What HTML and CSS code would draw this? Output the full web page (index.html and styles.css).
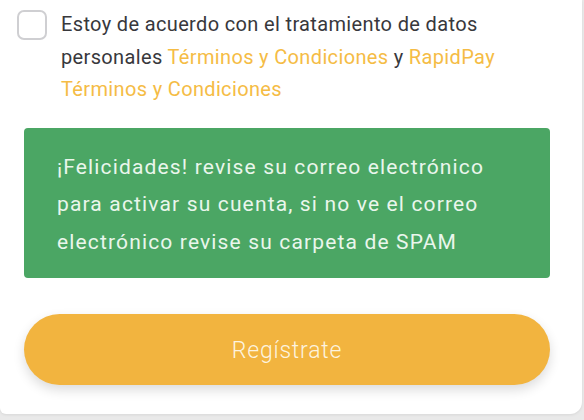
FILE: index.html
```html
<!DOCTYPE html>
<html lang="es">
<head>
<meta charset="utf-8">
<link rel="stylesheet" href="styles.css">
</head>
<body>
<div class="card">
  <label class="terms">
    <span class="box"></span>
    <span class="terms-text">Estoy de acuerdo con el tratamiento de datos personales <a class="link">Términos y Condiciones</a> y <a class="link">RapidPay Términos y Condiciones</a></span>
  </label>
  <div class="alert">¡Felicidades! revise su correo electrónico para activar su cuenta, si no ve el correo electrónico revise su carpeta de SPAM</div>
  <button class="btn">Regístrate</button>
</div>
</body>
</html>
```
FILE: styles.css
```css
html, body {
  margin: 0;
  padding: 0;
}
body {
  background: #e9e9e9;
  width: 584px;
  height: 420px;
  overflow: hidden;
  font-family: Roboto, "Liberation Sans", sans-serif;
}
.card {
  background: #ffffff;
  width: 582px;
  height: 414px;
  border-radius: 0 0 12px 6px;
  box-sizing: border-box;
  padding: 8px 32px 0 24px;
  box-shadow: 0 1px 3px rgba(0,0,0,0.08);
}
.terms {
  display: flex;
  align-items: flex-start;
  gap: 14px;
  margin-left: -7px;
}
.box {
  flex: none;
  width: 26px;
  height: 26px;
  margin-top: 2px;
  border: 2px solid #cfcfd2;
  border-radius: 7px;
}
.terms-text {
  width: 440px;
  font-size: 20px;
  letter-spacing: 0.35px;
  line-height: 32.5px;
  color: #38383c;
}
.link {
  color: #f5bc45;
}
.alert {
  margin-top: 22px;
  background: #4ba664;
  color: #eaf6ec;
  border-radius: 4px;
  padding: 21px 40px 14px 33px;
  font-size: 21px;
  letter-spacing: 1.15px;
  line-height: 37.5px;
  height: 150px;
  box-sizing: border-box;
}
.btn {
  display: block;
  margin-top: 36px;
  width: 100%;
  height: 71px;
  padding-top: 4px;
  border: none;
  border-radius: 36px;
  background: #f2b43f;
  color: #fdf3df;
  font-family: Roboto, sans-serif;
  font-weight: 300;
  font-size: 23px;
  letter-spacing: 0.8px;
  box-shadow: 0 5px 12px rgba(0,0,0,0.14);
}
```
